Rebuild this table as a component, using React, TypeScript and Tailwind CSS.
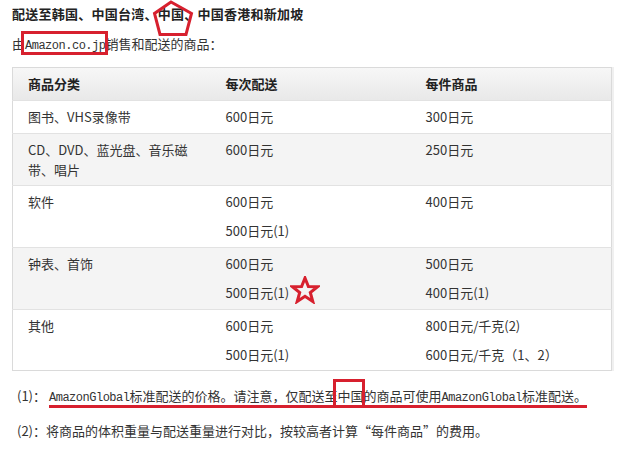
const RED = "#d7202e";

type Row = {
  name: React.ReactNode;
  perShip: string[];
  perItem: string[];
  h: string;
  gray?: boolean;
  star?: boolean;
};

const rows: Row[] = [
  { name: "图书、VHS录像带", perShip: ["600日元"], perItem: ["300日元"], h: "h-[33px]" },
  {
    name: (
      <>
        CD、DVD、蓝光盘、音乐磁
        <br />
        带、唱片
      </>
    ),
    perShip: ["600日元"],
    perItem: ["250日元"],
    h: "h-[52px]",
    gray: true,
  },
  { name: "软件", perShip: ["600日元", "500日元(1)"], perItem: ["400日元"], h: "h-[62px]" },
  {
    name: "钟表、首饰",
    perShip: ["600日元", "500日元(1)"],
    perItem: ["500日元", "400日元(1)"],
    h: "h-[62px]",
    gray: true,
    star: true,
  },
  {
    name: "其他",
    perShip: ["600日元", "500日元(1)"],
    perItem: ["800日元/千克(2)", "600日元/千克（1、2）"],
    h: "h-[61px]",
  },
];

// latin runs look like a half-width monospace in the original
function Mono({ children }: { children: React.ReactNode }) {
  return (
    <span className="font-['Liberation_Mono',monospace] text-[12px] leading-none tracking-[-0.5px]">
      {children}
    </span>
  );
}

function Star() {
  return (
    <svg
      className="absolute left-full top-[-7px] ml-[1px]"
      width="30"
      height="28"
      viewBox="0 0 30 28"
    >
      <polygon
        points="15,2 18.4,10.6 27.5,10.8 20.3,16.5 22.8,25.5 15,20.3 7.2,25.5 9.7,16.5 2.5,10.8 11.6,10.6"
        fill="none"
        stroke={RED}
        strokeWidth="3"
      />
    </svg>
  );
}

function Lines({ items, star }: { items: string[]; star?: boolean }) {
  return (
    <>
      {items.map((t, i) => (
        <div key={i} className={i > 0 ? "mt-[9px]" : ""}>
          <span className="relative">
            {t}
            {star && i === 1 ? <Star /> : null}
          </span>
        </div>
      ))}
    </>
  );
}

export default function App() {
  return (
    <div className="min-h-[453px] w-[626px] bg-white pl-[12px] font-['Noto_Sans_CJK_SC',sans-serif] text-[13px] text-[#333]">
      <h2 className="text-[13px] font-bold leading-[28px] tracking-[0.25px] text-[#222]">
        配送至韩国、中国台湾、
        <span className="relative">
          中国
          <svg
            className="absolute left-[-6px] top-[-4px]"
            width="42"
            height="37"
            viewBox="0 0 42 37"
          >
            <polygon
              points="19,2 39.5,13.5 34,34.5 8,34.5 2.5,13.5"
              fill="none"
              stroke={RED}
              strokeWidth="3"
            />
          </svg>
        </span>
        、中国香港和新加坡
      </h2>

      <p className="mt-[4px] h-[24px] leading-[24px]">
        由
        <span className="relative">
          <Mono>Amazon.co.jp</Mono>
          <span
            className="absolute -left-[4px] -right-[3px] -top-[3px] -bottom-[2px] border-[3px]"
            style={{ borderColor: RED }}
          />
        </span>
        销售和配送的商品：
      </p>

      <table className="mt-[11px] w-[599px] table-fixed border-collapse border border-[#dadada] shadow-[2px_0_0_#f0f0f0]">
        <colgroup>
          <col className="w-[198px]" />
          <col className="w-[200px]" />
          <col className="w-[201px]" />
        </colgroup>
        <thead>
          <tr className="h-[33px] bg-linear-to-b from-[#f7f7f7] to-[#e8e8e8]">
            <th className="pl-[15px] text-left align-middle font-bold text-[#222]">商品分类</th>
            <th className="pl-[15px] text-left align-middle font-bold text-[#222]">每次配送</th>
            <th className="pl-[15px] text-left align-middle font-bold text-[#222]">每件商品</th>
          </tr>
        </thead>
        <tbody>
          {rows.map((r, i) => (
            <tr
              key={i}
              className={`${r.h} border-t border-[#e2e2e2] ${r.gray ? "bg-[#f4f4f4]" : "bg-white"}`}
            >
              <td className="pl-[15px] pt-[6px] align-top leading-[20px]">{r.name}</td>
              <td className="pl-[15px] pt-[6px] align-top leading-[20px]">
                <Lines items={r.perShip} star={r.star} />
              </td>
              <td className="pl-[15px] pt-[6px] align-top leading-[20px]">
                <Lines items={r.perItem} />
              </td>
            </tr>
          ))}
        </tbody>
      </table>

      <div className="ml-[5px] mt-[13px] leading-[24px]">
        <p className="h-[24px]">
          (1)：
          <span className="ml-[3px] border-b-[3px]" style={{ borderColor: RED }}>
            <Mono>AmazonGlobal</Mono>标准配送的价格。请注意，仅配送至
            <span className="relative">
              中国
              <span
                className="absolute -left-[4px] -right-[2px] -top-[7px] -bottom-[3px] border-[3px]"
                style={{ borderColor: RED }}
              />
            </span>
            的商品可使用<Mono>AmazonGlobal</Mono>标准配送。
          </span>
        </p>
        <p className="mt-[11px]">
          (2)：将商品的体积重量与配送重量进行对比，按较高者计算“每件商品”的费用。
        </p>
      </div>
    </div>
  );
}
